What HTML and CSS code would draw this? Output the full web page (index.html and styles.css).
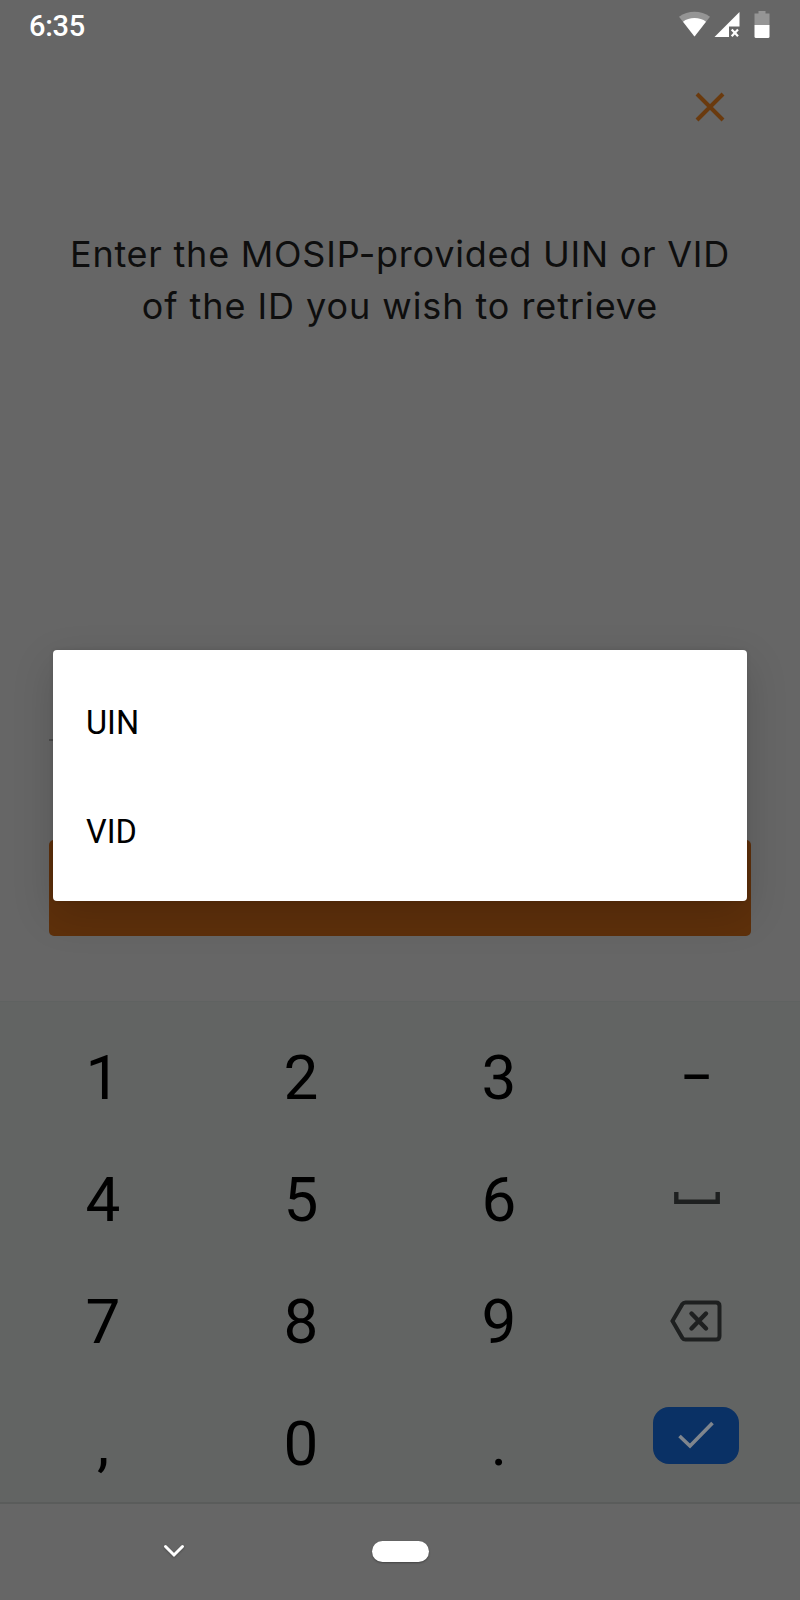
FILE: index.html
```html
<!DOCTYPE html>
<html lang="en">
<head>
<meta charset="utf-8">
<title>Retrieve your ID</title>
<link rel="stylesheet" href="styles.css">
</head>
<body>
<div class="screen">
  <header class="status">
    <span class="time">6:35</span>
    <svg class="status-icons" width="96" height="30" viewBox="0 0 96 30">
      <path d="M0 4.800C9 -2 22 -2 31 4.800L15.500 24.500Z" fill="#959595"/>
      <path d="M4 9.800C10 4.800 21 4.800 27 9.800L15.500 24.500Z" fill="#fff"/>
      <path d="M60.500 0V14.500H50V25H35.500Z" fill="#fff"/>
      <path d="M52.700 17.500L59 24.200M59 17.500L52.700 24.200" stroke="#fff" stroke-width="2.200" fill="none"/>
      <path d="M75.500 1.500H79.500V-1H86.500V1.500H90.500V13H75.500Z" fill="#959595"/>
      <path d="M75.500 13H90.500V24.500Q90.500 26 89 26H77Q75.500 26 75.500 24.500Z" fill="#fff"/>
    </svg>
  </header>
  <main class="content">
    <div class="close-row">
      <svg class="close" width="30" height="30" viewBox="0 0 30 30"><path d="M2 2L28 28M28 2L2 28" stroke="#6a3a0e" stroke-width="4" fill="none"/></svg>
    </div>
    <h1 class="title"><span class="line first">Enter the MOSIP-provided UIN or VID</span><span class="line second">of the ID you wish to retrieve</span></h1>
    <div class="field"></div>
    <div class="button"></div>
  </main>
  <section class="keypad">
    <span class="key">1</span><span class="key">2</span><span class="key">3</span><span class="key"><span class="dash">-</span></span>
    <span class="key">4</span><span class="key">5</span><span class="key">6</span>
    <span class="key"><svg class="space" width="46" height="12" viewBox="0 0 46 12"><path d="M2.300 0V9.700H43.700V0" stroke="#1e2020" stroke-width="4.400" fill="none"/></svg></span>
    <span class="key">7</span><span class="key">8</span><span class="key">9</span>
    <span class="key"><svg class="erase" width="52" height="42" viewBox="0 0 52 42"><path d="M15.500 2.500H46Q49.500 2.500 49.500 6V36Q49.500 39.500 46 39.500H15.500Q13.500 39.500 12.300 37.800L2.500 21L12.300 4.200Q13.500 2.500 15.500 2.500Z" stroke="#1e2020" stroke-width="4" fill="none"/><path d="M21.500 13.500L36 28.500M36 13.500L21.500 28.500" stroke="#1e2020" stroke-width="4.400" fill="none" stroke-linecap="round"/></svg></span>
    <span class="key">,</span><span class="key">0</span><span class="key">.</span>
    <span class="key"><span class="enter"><svg width="36" height="28" viewBox="0 0 36 28"><path d="M1.500 15L12 25L34.500 2" stroke="#7f858d" stroke-width="3.600" fill="none"/></svg></span></span>
  </section>
  <nav class="nav">
    <svg class="chevron" width="20" height="13" viewBox="0 0 20 13"><path d="M1.500 1.500L10 10L18.500 1.500" stroke="#fff" stroke-width="3" fill="none" stroke-linecap="round"/></svg>
    <span class="pill"></span>
  </nav>
  <div class="menu">
    <div class="option">UIN</div>
    <div class="option">VID</div>
  </div>
</div>
</body>
</html>
```
FILE: styles.css
```css
* { box-sizing: border-box; }
body { margin: 0; background: #666; font-family: Roboto, "Liberation Sans", sans-serif; }
svg { display: block; overflow: visible; }
.screen { position: relative; width: 800px; height: 1600px; overflow: hidden; display: flex; flex-direction: column; }
.status { height: 52px; padding: 12px 29px 0; display: flex; justify-content: space-between; align-items: flex-start; }
.time { color: #fff; font-size: 29px; font-weight: 500; line-height: 28px; letter-spacing: -.3px; }
.status-icons { margin-right: -4px; }
.content { height: 949px; padding: 40px 49px 0; display: flex; flex-direction: column; }
.close-row { display: flex; justify-content: flex-end; padding-right: 26px; }
.title { margin: 106px 0 0; font-family: Inter, "Open Sans", sans-serif; font-size: 36px; font-weight: 400; line-height: 52px; color: #0e0e0e; text-align: center; }
.line { display: block; white-space: nowrap; }
.first { letter-spacing: .76px; }
.second { letter-spacing: .93px; }
.field { width: 340px; margin-top: 407px; height: 2px; background: #4c4c4c; }
.button { margin-top: 99px; height: 96px; border-radius: 5px; background: #5e300b; }
.keypad { height: 503px; padding: 15px 4px 0; border-top: 1px solid #5f6261; border-bottom: 2px solid #5a5c5b; background: #626463; display: grid; grid-template-columns: repeat(4, 1fr); grid-auto-rows: 122px; align-content: start; }
.key { display: flex; align-items: center; justify-content: center; font-size: 62px; line-height: 122px; color: #000; }
.dash { transform: translateY(-4px) scaleX(1.65); }
.space { margin-bottom: 4px; }
.erase { margin: 0 2px 2px 0; }
.enter { width: 86px; height: 57px; margin: 0 2px 18px 0; border-radius: 16px; background: #0a3165; display: flex; align-items: center; justify-content: center; }
.nav { flex: 1; padding: 0 371px 2px 164px; display: flex; align-items: center; justify-content: space-between; }
.pill { width: 57px; height: 21px; border-radius: 11px; background: #fff; box-shadow: 0 1px 2px rgba(0,0,0,.35); }
.chevron { filter: drop-shadow(0 1px 1px rgba(0,0,0,.25)); }
.menu { position: absolute; left: 53px; top: 650px; width: 694px; height: 251px; padding-top: 18px; border-radius: 4px; background: #fff; box-shadow: 0 14px 42px rgba(0,0,0,.16), 0 0 4px rgba(0,0,0,.12); }
.option { height: 109px; padding-left: 33px; display: flex; align-items: center; font-size: 32.5px; color: #000; }
```
